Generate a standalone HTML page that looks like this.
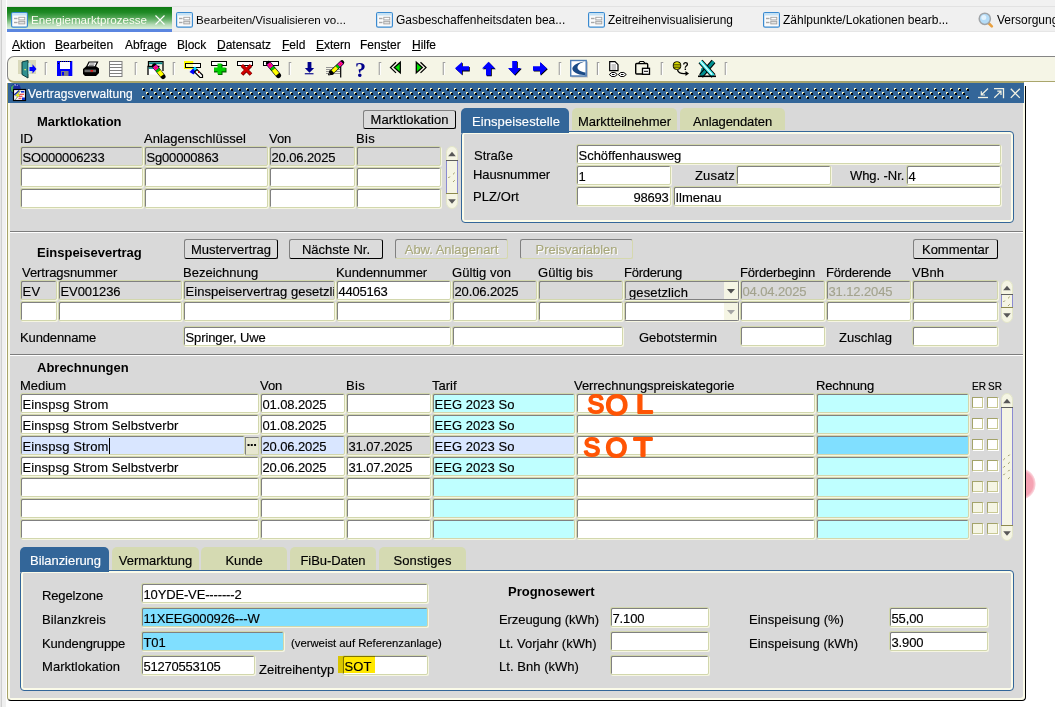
<!DOCTYPE html><html lang="de"><head><meta charset="utf-8"><title>Vertragsverwaltung</title><style>
*{box-sizing:border-box;margin:0;padding:0}
html,body{width:1055px;height:707px;overflow:hidden;background:#fff}
body{position:relative;font-family:"Liberation Sans",Arial,sans-serif;font-size:12px;color:#000;-webkit-text-stroke:0.15px}
.a{position:absolute;white-space:nowrap}
.l{position:absolute;white-space:nowrap;line-height:15px;height:15px;font-size:13px}
.b{font-weight:bold;font-size:13px;-webkit-text-stroke:0}
.f{position:absolute;height:20px;background:#fff;border:1px solid #d2d7ad;box-shadow:inset 1px 1px 0 #808080,1px 1px 0 #f6f6e2;border-radius:2px;padding:3px 0 0 1.5px;line-height:15px;font-size:13px;white-space:nowrap;overflow:hidden}
.f.d{background:#d9d9d9}
.f.c{background:#bfffff}
.f.s{background:#80dfff}
.f.h{background:#d9e6ff}
.f.r{text-align:right;padding-right:1.5px}
.f.g{color:#a3a38e}
.btn{position:absolute;height:20px;background:#dbdbdb;border:1px solid #808080;border-right:1.5px solid #000;border-bottom:1.5px solid #000;border-radius:2.5px;text-align:center;line-height:19px;font-size:13px;white-space:nowrap;overflow:hidden}
.btn.dis{color:#a8a87c;text-shadow:1px 1px 0 #fff;border:1px solid #808080;border-right:1px solid #d5d8ae;border-bottom:1px solid #d5d8ae}
.tab{position:absolute;height:22px;background:#d5dab2;border-radius:5px 5px 0 0;text-align:center;line-height:27px;font-size:13px;white-space:nowrap}
.tab.on{background:#336699;color:#fff;height:25px;text-indent:2px}
.pan{position:absolute;border:1px solid #336699;border-radius:4px;box-shadow:inset 0 0 0 2px #fbfbe9}
.hr{position:absolute;height:2px;border-top:1px solid #7d7d7d;border-bottom:1px solid #fff}
.cb{position:absolute;width:11px;height:11px;background:#fff;border:1px solid #c9c994;border-top-color:#a3a36a;border-left-color:#a3a36a;box-shadow:1px 1px 0 #fff}
.sb{position:absolute;width:13px;background:#e9e9f2;border:1px solid #c3c39b;border-radius:4px}
.tt{-webkit-text-stroke:0;position:absolute;top:8px;height:24px;line-height:24px;font-size:12px;white-space:nowrap;color:#000}
.mi{position:absolute;top:38px;line-height:14px;font-size:12px;white-space:nowrap}
.mi u{text-decoration:underline}
</style></head><body>
<div class="a" style="left:0;top:0;width:1055px;height:32px;background:#f0f0f0;border-bottom:1px solid #e6e6e6;box-shadow:inset 0 6px 0 #f1f1f1,inset 0 7px 0 #e2e2e2"></div>
<div class="a" style="left:0;top:0;width:7px;height:707px;background:#f0f0f0;border-left:1px solid #e6e6e6;box-shadow:inset 1px 0 0 #cfcfcf,inset -1px 0 0 #fff"></div>
<div class="a" style="left:7px;top:7px;width:165px;height:25px;background:linear-gradient(#0d7a11 0%,#1f8a25 25%,#5fae63 55%,#b4dab5 80%,#dcefdc 100%);border-bottom:3px solid #5b86e0"></div>
<svg class="a" style="left:11px;top:12px" width="17" height="16" viewBox="0 0 17 16"><rect x="0.600" y="0.600" width="15.800" height="14.600" rx="1.500" fill="#fbfbfb" stroke="#3a8ad0" stroke-width="1.200"/><rect x="1.200" y="1.200" width="14.600" height="2.300" fill="#c4e2f6"/><rect x="3" y="5.800" width="3.500" height="1.400" fill="#a8a8a8"/><rect x="3" y="9.800" width="3.500" height="1.400" fill="#a8a8a8"/><rect x="7.800" y="5.300" width="6" height="2.600" fill="#fff" stroke="#a0a0a0" stroke-width="0.900"/><rect x="7.800" y="9.300" width="6" height="2.600" fill="#e4e4e4" stroke="#a0a0a0" stroke-width="0.900"/></svg>
<div class="tt" style="left:31px;color:#fdfdf2;top:8px;font-size:11.6px">Energiemarktprozesse</div>
<svg class="a" style="left:154px;top:14px" width="12" height="12" viewBox="0 0 12 12"><path d="M1.5 1.5L10.5 10.5M10.5 1.5L1.5 10.5" stroke="#fff" stroke-width="1.1" fill="none"/></svg>
<svg class="a" style="left:176px;top:12px" width="17" height="16" viewBox="0 0 17 16"><rect x="0.600" y="0.600" width="15.800" height="14.600" rx="1.500" fill="#fbfbfb" stroke="#3a8ad0" stroke-width="1.200"/><rect x="1.200" y="1.200" width="14.600" height="2.300" fill="#c4e2f6"/><rect x="3" y="5.800" width="3.500" height="1.400" fill="#a8a8a8"/><rect x="3" y="9.800" width="3.500" height="1.400" fill="#a8a8a8"/><rect x="7.800" y="5.300" width="6" height="2.600" fill="#fff" stroke="#a0a0a0" stroke-width="0.900"/><rect x="7.800" y="9.300" width="6" height="2.600" fill="#e4e4e4" stroke="#a0a0a0" stroke-width="0.900"/></svg>
<div class="tt" style="left:196px;font-size:11.6px">Bearbeiten/Visualisieren vo...</div>
<svg class="a" style="left:376px;top:12px" width="17" height="16" viewBox="0 0 17 16"><rect x="0.600" y="0.600" width="15.800" height="14.600" rx="1.500" fill="#fbfbfb" stroke="#3a8ad0" stroke-width="1.200"/><rect x="1.200" y="1.200" width="14.600" height="2.300" fill="#c4e2f6"/><rect x="3" y="5.800" width="3.500" height="1.400" fill="#a8a8a8"/><rect x="3" y="9.800" width="3.500" height="1.400" fill="#a8a8a8"/><rect x="7.800" y="5.300" width="6" height="2.600" fill="#fff" stroke="#a0a0a0" stroke-width="0.900"/><rect x="7.800" y="9.300" width="6" height="2.600" fill="#e4e4e4" stroke="#a0a0a0" stroke-width="0.900"/></svg>
<div class="tt" style="left:396px;font-size:12px">Gasbeschaffenheitsdaten bea...</div>
<svg class="a" style="left:588px;top:12px" width="17" height="16" viewBox="0 0 17 16"><rect x="0.600" y="0.600" width="15.800" height="14.600" rx="1.500" fill="#fbfbfb" stroke="#3a8ad0" stroke-width="1.200"/><rect x="1.200" y="1.200" width="14.600" height="2.300" fill="#c4e2f6"/><rect x="3" y="5.800" width="3.500" height="1.400" fill="#a8a8a8"/><rect x="3" y="9.800" width="3.500" height="1.400" fill="#a8a8a8"/><rect x="7.800" y="5.300" width="6" height="2.600" fill="#fff" stroke="#a0a0a0" stroke-width="0.900"/><rect x="7.800" y="9.300" width="6" height="2.600" fill="#e4e4e4" stroke="#a0a0a0" stroke-width="0.900"/></svg>
<div class="tt" style="left:608px;font-size:11.9px">Zeitreihenvisualisierung</div>
<svg class="a" style="left:763px;top:12px" width="17" height="16" viewBox="0 0 17 16"><rect x="0.600" y="0.600" width="15.800" height="14.600" rx="1.500" fill="#fbfbfb" stroke="#3a8ad0" stroke-width="1.200"/><rect x="1.200" y="1.200" width="14.600" height="2.300" fill="#c4e2f6"/><rect x="3" y="5.800" width="3.500" height="1.400" fill="#a8a8a8"/><rect x="3" y="9.800" width="3.500" height="1.400" fill="#a8a8a8"/><rect x="7.800" y="5.300" width="6" height="2.600" fill="#fff" stroke="#a0a0a0" stroke-width="0.900"/><rect x="7.800" y="9.300" width="6" height="2.600" fill="#e4e4e4" stroke="#a0a0a0" stroke-width="0.900"/></svg>
<div class="tt" style="left:783px;font-size:12px">Zählpunkte/Lokationen bearb...</div>
<svg class="a" style="left:977px;top:11px" width="17" height="17" viewBox="0 0 17 17"><path d="M11.500 12L14.800 15.300" stroke="#e8a040" stroke-width="2.600" stroke-linecap="round"/><circle cx="7.800" cy="7.800" r="5.600" fill="#b4dcf8" stroke="#a0a4a8" stroke-width="1.500"/><circle cx="6.800" cy="6.500" r="2.500" fill="#e4f3fd"/></svg>
<div class="tt" style="left:997px">Versorgung</div>
<div class="mi" style="left:12px"><u>A</u>ktion</div>
<div class="mi" style="left:55px"><u>B</u>earbeiten</div>
<div class="mi" style="left:125px">Abf<u>r</u>age</div>
<div class="mi" style="left:177px">B<u>l</u>ock</div>
<div class="mi" style="left:217px"><u>D</u>atensatz</div>
<div class="mi" style="left:282px"><u>F</u>eld</div>
<div class="mi" style="left:316px"><u>E</u>xtern</div>
<div class="mi" style="left:360px">Fen<u>s</u>ter</div>
<div class="mi" style="left:412px"><u>H</u>ilfe</div>
<div class="a" style="left:7px;top:56px;width:1048px;height:27px;background:#f5f5e6;border:1px solid #858585;border-right:0;border-bottom:2px solid #aaa66c;border-radius:7px 0 0 7px"></div>
<svg class="a" style="left:0;top:56px" width="1055" height="28" viewBox="0 56 1055 28"><path d="M45.3 75V62.5h2" stroke="#a0a0a0" stroke-width="1.2" fill="none"/><path d="M46.4 75V63" stroke="#fff" stroke-width="1" fill="none"/><path d="M135.3 75V62.5h2" stroke="#a0a0a0" stroke-width="1.2" fill="none"/><path d="M136.4 75V63" stroke="#fff" stroke-width="1" fill="none"/><path d="M173.3 75V62.5h2" stroke="#a0a0a0" stroke-width="1.2" fill="none"/><path d="M174.4 75V63" stroke="#fff" stroke-width="1" fill="none"/><path d="M289.3 75V62.5h2" stroke="#a0a0a0" stroke-width="1.2" fill="none"/><path d="M290.4 75V63" stroke="#fff" stroke-width="1" fill="none"/><path d="M379.3 75V62.5h2" stroke="#a0a0a0" stroke-width="1.2" fill="none"/><path d="M380.4 75V63" stroke="#fff" stroke-width="1" fill="none"/><path d="M443.3 75V62.5h2" stroke="#a0a0a0" stroke-width="1.2" fill="none"/><path d="M444.4 75V63" stroke="#fff" stroke-width="1" fill="none"/><path d="M559.3 75V62.5h2" stroke="#a0a0a0" stroke-width="1.2" fill="none"/><path d="M560.4 75V63" stroke="#fff" stroke-width="1" fill="none"/><path d="M597.4 75V62.5h2" stroke="#a0a0a0" stroke-width="1.2" fill="none"/><path d="M598.5 75V63" stroke="#fff" stroke-width="1" fill="none"/><path d="M661.3 75V62.5h2" stroke="#a0a0a0" stroke-width="1.2" fill="none"/><path d="M662.4 75V63" stroke="#fff" stroke-width="1" fill="none"/><path d="M725.3 75V62.5h2" stroke="#a0a0a0" stroke-width="1.2" fill="none"/><path d="M726.4 75V63" stroke="#fff" stroke-width="1" fill="none"/><rect x="18" y="60" width="18" height="14" fill="#d9d9bb"/><path d="M22 62l6-1.5V78l-6-3.5z" fill="#2f9090" stroke="#0b3b3b" stroke-width="1"/><rect x="28.5" y="63" width="2" height="11" fill="#b8f0f8"/><path d="M29.5 67h3v-2.7l4 4.6-4 4.6V71h-3z" fill="#0000ff"/><rect x="24.5" y="69" width="1.3" height="1.3" fill="#ffff60"/><rect x="57" y="61" width="15.3" height="15" fill="#0000ff"/><rect x="60" y="62" width="10" height="7" fill="#fff"/><path d="M60 61.5h11" stroke="#000" stroke-width="1" stroke-dasharray="1 1"/><rect x="58" y="63" width="1" height="1" fill="#000"/><rect x="61" y="71" width="7.5" height="5" fill="#808080"/><rect x="62" y="72" width="2" height="3.5" fill="#0000ff"/><path d="M86.5 67l2.5-5h8.5l-2.5 5z" fill="#fff" stroke="#000" stroke-width="1.2"/><path d="M89.5 64h5M88.8 65.6h5" stroke="#555" stroke-width="0.8"/><path d="M83 69l3-2.5h10.5l2.5 2v4.500l-3 3h-11l-2-2z" fill="#000"/><rect x="84.5" y="69.6" width="11.5" height="2.6" fill="#6a6a6a"/><rect x="90.5" y="70.2" width="2.5" height="1.4" fill="#ff0000"/><rect x="109.5" y="61.5" width="12.5" height="15" fill="#fff" stroke="#808080"/><path d="M109.5 64.5h12.500M109.5 67.5h12.500M109.5 70.500h12.500M109.5 73.500h12.500" stroke="#808080"/><path d="M148.500 66.500V61.700h14.500V71" fill="none" stroke="#000" stroke-width="1.3"/><rect x="149.200" y="62.400" width="13.200" height="1.800" fill="#008080"/><rect x="148" y="66.500" width="11" height="8" fill="#fff"/><path d="M148 75V66.500h11.500" fill="none" stroke="#000" stroke-width="1.3"/><rect x="148.700" y="67.200" width="10" height="1.600" fill="#008080"/><path d="M154.5 66.0L163.0 76.5" stroke="#000" stroke-width="5.1" stroke-linecap="round"/><path d="M154.5 66.0L157.2 69.4" stroke="#ff00c8" stroke-width="4.2"/><path d="M155.2 66.8L156.4 68.3" stroke="#ff2020" stroke-width="2.1"/><path d="M157.2 69.4L158.8 71.2" stroke="#00c000" stroke-width="4.2"/><path d="M158.8 71.2L162.2 75.5" stroke="#ffff00" stroke-width="4.2"/><rect x="184" y="61" width="9.300" height="8" fill="#ffff00"/><rect x="185.500" y="63.500" width="15" height="4" fill="#fff" stroke="#000"/><rect x="186" y="64" width="7" height="3" fill="#ffffa0"/><path d="M189.500 72l5-5 3 3-4 4.500z" fill="#0000ff"/><path d="M193 68.500l2-2 3 3.500-2 2z" fill="#00e0ff"/><path d="M194.500 72l2.500-2.500 5.500 5.500v2.500h-2.500z" fill="#fff" stroke="#000" stroke-width="1.200"/><rect x="198" y="71.500" width="1.500" height="1.500" fill="#ff0000"/><rect x="211.500" y="61.500" width="15" height="4" fill="#fff" stroke="#000"/><path d="M218 64h4.500v4h4v4.500h-4v2.500h-4.500v-2.500h-4v-4.500h4z" fill="#006000"/><path d="M217.500 63.500h4v4h4v3.700h-4v3h-4v-3h-3.500v-3.700h3.500z" fill="#00d000"/><rect x="237.500" y="61.500" width="15" height="4" fill="#fff" stroke="#000"/><path d="M242 65.500l9 9M251 65.500l-9 9" stroke="#700000" stroke-width="3.600"/><path d="M241.800 65.200l9 9M250.800 65.200l-9 9" stroke="#d00000" stroke-width="2.600"/><rect x="263.500" y="61.500" width="15" height="4" fill="#fff" stroke="#000"/><path d="M268.5 63.5L278.5 75.5" stroke="#000" stroke-width="5.1" stroke-linecap="round"/><path d="M268.5 63.5L271.7 67.3" stroke="#ff00c8" stroke-width="4.2"/><path d="M269.3 64.5L270.7 66.1" stroke="#ff2020" stroke-width="2.1"/><path d="M271.7 67.3L273.5 69.5" stroke="#00c000" stroke-width="4.2"/><path d="M273.5 69.5L277.5 74.3" stroke="#ffff00" stroke-width="4.2"/><rect x="307.600" y="62" width="3.800" height="6.500" fill="#00008b"/><path d="M304.800 68h9.400l-4.700 4.700z" fill="#00008b"/><rect x="304.800" y="73.200" width="8.700" height="1.100" fill="#00008b"/><path d="M326 67.500h14M326 69.500h14M326 71.500h14M326 73.500h14" stroke="#8a8a8a" stroke-width="0.900"/><path d="M340.700 66v11.500" stroke="#000" stroke-width="1.200"/><path d="M328.500 75l1.500-4.500 3.500 3.500z" fill="#fff" stroke="#000" stroke-width="1"/><path d="M342.0 62.5L331.5 72.5" stroke="#000" stroke-width="4.5" stroke-linecap="round"/><path d="M342.0 62.5L338.6 65.7" stroke="#ff00c8" stroke-width="3.6"/><path d="M341.2 63.3L339.7 64.7" stroke="#ff2020" stroke-width="1.8"/><path d="M338.6 65.7L336.8 67.5" stroke="#00c000" stroke-width="3.6"/><path d="M336.8 67.5L332.6 71.5" stroke="#ffff00" stroke-width="3.6"/><text x="355" y="77" font-family="Liberation Serif,serif" font-weight="bold" font-size="22" fill="#00008b">?</text><path d="M400.300 62.300v10.600l-6-5.300z" fill="#00e000" stroke="#000" stroke-width="1.300"/><path d="M396 62.300l-5.500 5.300 5.500 5.300" fill="none" stroke="#000" stroke-width="1.300"/><path d="M416.300 62.300v10.600l6-5.300z" fill="#00e000" stroke="#000" stroke-width="1.300"/><path d="M420.500 62.300l5.500 5.300-5.500 5.300" fill="none" stroke="#000" stroke-width="1.300"/><path d="M455.0 68.3 462.0 62.0 462.0 66.2 469.0 66.2 469.0 70.6 462.0 70.6 462.0 74.8z" fill="#000" transform="translate(0.8,0.8)"/><path d="M455.0 68.3 462.0 62.0 462.0 66.2 469.0 66.2 469.0 70.6 462.0 70.6 462.0 74.8z" fill="#0000ff"/><path d="M488.5 61.7 495.0 68.5 491.0 68.5 491.0 75.4 486.0 75.4 486.0 68.5 482.0 68.5z" fill="#000" transform="translate(0.8,0.8)"/><path d="M488.5 61.7 495.0 68.5 491.0 68.5 491.0 75.4 486.0 75.4 486.0 68.5 482.0 68.5z" fill="#0000ff"/><path d="M514.5 75.0 508.0 68.0 512.2 68.0 512.2 61.0 517.0 61.0 517.0 68.0 521.0 68.0z" fill="#000" transform="translate(0.8,0.8)"/><path d="M514.5 75.0 508.0 68.0 512.2 68.0 512.2 61.0 517.0 61.0 517.0 68.0 521.0 68.0z" fill="#0000ff"/><path d="M547.0 68.5 540.0 62.0 540.0 66.3 533.0 66.3 533.0 70.8 540.0 70.8 540.0 75.0z" fill="#000" transform="translate(0.8,0.8)"/><path d="M547.0 68.5 540.0 62.0 540.0 66.3 533.0 66.3 533.0 70.8 540.0 70.8 540.0 75.0z" fill="#0000ff"/><rect x="571.500" y="61.500" width="16.500" height="16" fill="#c4c4c4"/><rect x="570.700" y="60.500" width="15.500" height="15.500" fill="#fff" stroke="#4c7cb6" stroke-width="1.400"/><path d="M585 61.500C576 62.500 571.500 66.500 572.500 69.500C574 73.500 580 75.200 585.500 75.200L585.500 72.500C581 72 577.500 70 577.500 67.500C577.500 64.500 581 62.500 585 61.500Z" fill="#1a4a86"/><path d="M609.700 61.700h5.300l3 3v6h-8.300z" fill="#fff" stroke="#000" stroke-width="1.200"/><path d="M611.500 65h4.500M611.500 67h4.500M611.500 69h4.500" stroke="#777" stroke-width="0.800"/><path d="M609.300 74.500l2.500-2h3l2.500 2-2.500 2h-3z" fill="#fff" stroke="#000"/><path d="M618.300 74.500l2.500-2h3l2.500 2-2.500 2h-3z" fill="#fff" stroke="#000"/><path d="M612 74.500h2.500M621 74.500h2.500" stroke="#000" stroke-width="1"/><rect x="635.700" y="63.500" width="12" height="10.500" rx="1" fill="#f5f5e6" stroke="#000" stroke-width="1.400"/><path d="M638.500 63.500l1.500-2h3.500l1.500 2z" fill="#f5f5e6" stroke="#000" stroke-width="1.200"/><rect x="642.500" y="68.300" width="7" height="6" fill="#fff" stroke="#000" stroke-width="1.300"/><path d="M644 71.300h4" stroke="#000" stroke-width="1"/><rect x="673.300" y="61.800" width="7.400" height="7.600" rx="3" fill="#ffff00" stroke="#000" stroke-width="1"/><path d="M673.500 64.300h7M673.500 66h7M673.500 67.700h7" stroke="#000" stroke-width="0.700"/><text x="682.500" y="69.600" font-family="Liberation Sans,sans-serif" font-weight="bold" font-size="10" fill="#000">?</text><path d="M677.500 70C678.500 73 682 74 686 73.500" fill="none" stroke="#000" stroke-width="1.300"/><path d="M685.500 71l3.500 2.500-3.500 2.500z" fill="#000"/><path d="M699.500 76l8-8-6-0z" fill="#008a8a"/><path d="M713.500 61.500L701 76" stroke="#000" stroke-width="5"/><path d="M713.500 61.500L701 76" stroke="#009090" stroke-width="3"/><path d="M700.500 61.500L713.500 76" stroke="#000" stroke-width="5.400"/><path d="M700.500 61.500L713.500 76" stroke="#30e8e8" stroke-width="3.400"/><path d="M700.200 61.200L712 74.500" stroke="#e8ffff" stroke-width="1.200"/><path d="M698 76.300h18" stroke="#000" stroke-width="1.600"/></svg>
<div class="a" style="left:7px;top:83px;width:1019px;height:618px;background:#d9d9d9;border-right:1px solid #000;border-bottom:1px solid #000;border-left:1px solid #a8a46a;border-radius:0 0 4px 4px;box-shadow:inset 2px 0 0 #fbfbe9,inset -2px -2px 0 #fbfbe9"></div>
<div class="a" style="left:8px;top:83px;width:1016px;height:20px;background:#336699"></div>
<div class="a" style="left:1024px;top:82px;width:31px;height:4px;background:#fff"></div>
<svg class="a" style="left:142px;top:88px" width="828" height="11" shape-rendering="crispEdges"><defs><pattern id="dp" width="8" height="8" patternUnits="userSpaceOnUse"><rect x="0" y="0" width="2" height="2" fill="#f4f4c8"/><rect x="1" y="1" width="2" height="2" fill="#000"/><rect x="4" y="4" width="2" height="2" fill="#f4f4c8"/><rect x="5" y="5" width="2" height="2" fill="#000"/></pattern></defs><rect width="828" height="11" fill="url(#dp)"/></svg>
<div class="a" style="left:28px;top:87px;color:#fff;line-height:14px;font-size:12px;letter-spacing:0.12px">Vertragsverwaltung</div>
<svg class="a" style="left:970px;top:84px" width="56" height="19" viewBox="970 84 56 19"><path d="M978 97.500h10" stroke="#f3f3e4" stroke-width="1.300"/><path d="M988 88.500l-6.500 6.200M981.300 91.300v3.700h3.700" fill="none" stroke="#f3f3e4" stroke-width="1.200"/><path d="M994 88.700h9.500v9.500" fill="none" stroke="#f3f3e4" stroke-width="1.300"/><path d="M994.300 97.800l6.600-6.400M997.300 91.200h3.700v3.700" fill="none" stroke="#f3f3e4" stroke-width="1.200"/><path d="M1010.800 88.700l9 9.200M1019.800 88.700l-9 9.200" stroke="#f3f3e4" stroke-width="1.300"/></svg>
<svg class="a" style="left:9px;top:84px" width="18" height="19" viewBox="9 84 18 19"><circle cx="15.500" cy="89" r="5.300" fill="#1a2ba0"/><path d="M11 87c1-1.500 2-2 3-2l-1 3 1 2-1.500 2.500c-1.500-1-2-3-1.500-5.500z" fill="#46a860"/><path d="M14 85l1.500-.5.500 1.500M17 85l1 .5" stroke="#c8c8f0" stroke-width="0.800" fill="none"/><rect x="13.500" y="89.500" width="12" height="11" fill="#fff" stroke="#000" stroke-width="1.200"/><path d="M14.200 95l5-4.500" stroke="#1a2ba0" stroke-width="1.500"/><rect x="21" y="91" width="3.300" height="1.600" fill="#1030d0"/><path d="M19.500 94.300h4.500M19 96.300h3.500M18.500 98.300h3" stroke="#f02020" stroke-width="1.100"/><rect x="22" y="97.500" width="3" height="2.500" fill="#1030d0"/><path d="M19.500 91l-4.500 5h2.500l-2.500 4 5.500-5.500h-2.500l2.500-3.500z" fill="#ffff00" stroke="#1a2ba0" stroke-width="0.300"/></svg>
<div class="l b" style="left:37px;top:114px">Marktlokation</div>
<div class="btn" style="left:363px;top:110px;width:93px;height:19px;line-height:18px;letter-spacing:0.05px">Marktlokation</div>
<div class="l" style="left:20px;top:131px">ID</div>
<div class="l" style="left:144px;top:131px;letter-spacing:0.05px">Anlagenschlüssel</div>
<div class="l" style="left:269px;top:131px;letter-spacing:-0.04px">Von</div>
<div class="l" style="left:356px;top:131px;letter-spacing:0.31px">Bis</div>
<div class="f d" style="left:20px;top:146px;width:123px;letter-spacing:-0.17px">SO000006233</div>
<div class="f d" style="left:144px;top:146px;width:124px;letter-spacing:-0.17px">Sg00000863</div>
<div class="f d" style="left:269px;top:146px;width:86px;letter-spacing:-0.11px">20.06.2025</div>
<div class="f d" style="left:356px;top:146px;width:85px"></div>
<div class="f" style="left:20px;top:167px;width:123px"></div>
<div class="f" style="left:144px;top:167px;width:124px"></div>
<div class="f" style="left:269px;top:167px;width:86px"></div>
<div class="f" style="left:356px;top:167px;width:85px"></div>
<div class="f" style="left:20px;top:188px;width:123px"></div>
<div class="f" style="left:144px;top:188px;width:124px"></div>
<div class="f" style="left:269px;top:188px;width:86px"></div>
<div class="f" style="left:356px;top:188px;width:85px"></div>
<svg class="a" style="left:446px;top:146px" width="12" height="63" viewBox="0 0 12 63"><rect x="0.5" y="0.5" width="11" height="62" rx="6" fill="#f5f5e4" stroke="#e3e6c8"/><path d="M6.0 5.800l3.800 4.400h-7.600z" fill="#585858"/><path d="M6.0 57.7l3.800 -4.400h-7.600z" fill="#585858"/><rect x="0" y="14" width="12" height="34" fill="#f5f5e4"/><path d="M0.500 14V48M11.5 14V48" stroke="#8b8bd2" stroke-width="1"/><path d="M0 14.5H12" stroke="#5e5e5e" stroke-width="1"/><path d="M0 47.5H12" stroke="#8d8a4e" stroke-width="1"/><path d="M7.2 28.2l1.400 -1.400" stroke="#8d8a4e" stroke-width="1"/><path d="M2.4 32.0l1.400 -1.400" stroke="#8d8a4e" stroke-width="1"/><path d="M7.2 35.8l1.400 -1.400" stroke="#8d8a4e" stroke-width="1"/></svg>
<div class="pan" style="left:461px;top:131px;width:553px;height:92px"></div>
<div class="tab on" style="left:461px;top:108px;width:108px;letter-spacing:0.09px">Einspeisestelle</div>
<div class="tab" style="left:572px;top:108px;width:105px">Marktteilnehmer</div>
<div class="tab" style="left:680px;top:108px;width:105px;letter-spacing:-0.10px">Anlagendaten</div>
<div class="l" style="left:474px;top:148px">Straße</div>
<div class="l" style="left:473px;top:167px;letter-spacing:-0.10px">Hausnummer</div>
<div class="l" style="left:473px;top:189px;letter-spacing:0.07px">PLZ/Ort</div>
<div class="f" style="left:576px;top:144px;width:425px;letter-spacing:-0.02px">Schöffenhausweg</div>
<div class="f" style="left:576px;top:165px;width:95px">1</div>
<div class="l" style="left:695px;top:168px;letter-spacing:0.16px">Zusatz</div>
<div class="f" style="left:736px;top:165px;width:95px"></div>
<div class="l" style="left:850px;top:168px;letter-spacing:-0.07px">Whg. -Nr.</div>
<div class="f" style="left:906px;top:165px;width:95px">4</div>
<div class="f r" style="left:576px;top:186px;width:95px;letter-spacing:-0.23px">98693</div>
<div class="f" style="left:673px;top:186px;width:328px;letter-spacing:-0.04px">Ilmenau</div>
<div class="hr" style="left:10px;top:231px;width:1013px"></div>
<div class="l b" style="left:37px;top:245px">Einspeisevertrag</div>
<div class="btn" style="left:184px;top:239px;width:94px">Mustervertrag</div>
<div class="btn" style="left:289px;top:239px;width:94px;letter-spacing:0.03px">Nächste Nr.</div>
<div class="btn dis" style="left:395px;top:239px;width:113px;letter-spacing:-0.03px">Abw. Anlagenart</div>
<div class="btn dis" style="left:520px;top:239px;width:113px;letter-spacing:-0.03px">Preisvariablen</div>
<div class="btn" style="left:913px;top:239px;width:85px;letter-spacing:-0.02px">Kommentar</div>
<div class="l" style="left:22px;top:265px;letter-spacing:-0.06px">Vertragsnummer</div>
<div class="l" style="left:183px;top:265px">Bezeichnung</div>
<div class="l" style="left:336px;top:265px;letter-spacing:-0.12px">Kundennummer</div>
<div class="l" style="left:452px;top:265px;letter-spacing:0.05px">Gültig von</div>
<div class="l" style="left:538px;top:265px;letter-spacing:0.08px">Gültig bis</div>
<div class="l" style="left:624px;top:265px;letter-spacing:-0.22px">Förderung</div>
<div class="l" style="left:740px;top:265px;letter-spacing:-0.19px">Förderbeginn</div>
<div class="l" style="left:826px;top:265px;letter-spacing:-0.22px">Förderende</div>
<div class="l" style="left:912px;top:265px;letter-spacing:0.05px">VBnh</div>
<div class="f d" style="left:20px;top:280px;width:37px;letter-spacing:0.33px">EV</div>
<div class="f d" style="left:58px;top:280px;width:124px;letter-spacing:-0.09px">EV001236</div>
<div class="f d" style="left:183px;top:280px;width:152px;letter-spacing:0.04px">Einspeiservertrag gesetzli</div>
<div class="f" style="left:336px;top:280px;width:115px;letter-spacing:-0.23px">4405163</div>
<div class="f d" style="left:452px;top:280px;width:85px;letter-spacing:-0.11px">20.06.2025</div>
<div class="f d" style="left:538px;top:280px;width:85px"></div>
<div class="f d" style="left:624px;top:280px;width:115px;border-right-color:#808080;border-bottom-color:#808080;padding:4px 0 0 4px;letter-spacing:0.12px">gesetzlich<div style="position:absolute;right:0;top:1px;width:14px;height:17px;background:#f5f5e4"></div><svg style="position:absolute;right:3px;top:8px" width="8" height="5"><path d="M0 0h8l-4 4.500z" fill="#505050"/></svg></div>
<div class="f d g" style="left:740px;top:280px;width:85px;letter-spacing:-0.11px">04.04.2025</div>
<div class="f d g" style="left:826px;top:280px;width:85px;letter-spacing:-0.11px">31.12.2045</div>
<div class="f d" style="left:912px;top:280px;width:86px"></div>
<div class="f" style="left:20px;top:301px;width:37px"></div>
<div class="f" style="left:58px;top:301px;width:124px"></div>
<div class="f" style="left:183px;top:301px;width:152px"></div>
<div class="f" style="left:336px;top:301px;width:115px"></div>
<div class="f" style="left:452px;top:301px;width:85px"></div>
<div class="f" style="left:538px;top:301px;width:85px"></div>
<div class="f" style="left:624px;top:301px;width:115px;border-right-color:#808080;border-bottom-color:#808080;padding:4px 0 0 4px"><div style="position:absolute;right:0;top:1px;width:14px;height:17px;background:#f5f5e4"></div><svg style="position:absolute;right:3px;top:8px" width="8" height="5"><path d="M0 0h8l-4 4.500z" fill="#a4a4a4"/></svg></div>
<div class="f" style="left:740px;top:301px;width:85px"></div>
<div class="f" style="left:826px;top:301px;width:85px"></div>
<div class="f" style="left:912px;top:301px;width:86px"></div>
<svg class="a" style="left:1001px;top:280px" width="12" height="43" viewBox="0 0 12 43"><rect x="0.5" y="0.5" width="11" height="42" rx="6" fill="#f5f5e4" stroke="#e3e6c8"/><path d="M6.0 5.800l3.800 4.400h-7.600z" fill="#585858"/><path d="M6.0 37.7l3.800 -4.400h-7.600z" fill="#585858"/><rect x="0" y="14" width="12" height="14" fill="#f5f5e4"/><path d="M0.500 14V28M11.5 14V28" stroke="#8b8bd2" stroke-width="1"/><path d="M0 14.5H12" stroke="#5e5e5e" stroke-width="1"/><path d="M0 27.5H12" stroke="#8d8a4e" stroke-width="1"/><path d="M7.2 18.2l1.400 -1.400" stroke="#8d8a4e" stroke-width="1"/><path d="M2.4 22.0l1.400 -1.400" stroke="#8d8a4e" stroke-width="1"/><path d="M7.2 25.8l1.400 -1.400" stroke="#8d8a4e" stroke-width="1"/></svg>
<div class="l" style="left:20px;top:330px;letter-spacing:-0.13px">Kundenname</div>
<div class="f" style="left:183px;top:326px;width:268px;letter-spacing:-0.11px">Springer, Uwe</div>
<div class="f" style="left:452px;top:326px;width:171px"></div>
<div class="l" style="left:639px;top:330px">Gebotstermin</div>
<div class="f" style="left:740px;top:326px;width:85px"></div>
<div class="l" style="left:839px;top:330px;letter-spacing:0.03px">Zuschlag</div>
<div class="f" style="left:912px;top:326px;width:86px"></div>
<div class="hr" style="left:10px;top:354px;width:1013px"></div>
<div class="l b" style="left:37px;top:360px">Abrechnungen</div>
<div class="l" style="left:20px;top:378px;letter-spacing:-0.04px">Medium</div>
<div class="l" style="left:260px;top:378px;letter-spacing:-0.04px">Von</div>
<div class="l" style="left:346px;top:378px;letter-spacing:0.31px">Bis</div>
<div class="l" style="left:432px;top:378px">Tarif</div>
<div class="l" style="left:574px;top:378px;letter-spacing:-0.06px">Verrechnungspreiskategorie</div>
<div class="l" style="left:816px;top:378px;letter-spacing:-0.16px">Rechnung</div>
<div class="l" style="left:972px;top:379px;font-size:10px;letter-spacing:0.05px">ER</div>
<div class="l" style="left:988px;top:379px;font-size:10px;letter-spacing:0.05px">SR</div>
<div class="f" style="left:20px;top:393px;width:239px;letter-spacing:0.11px">Einspsg Strom</div>
<div class="f" style="left:260px;top:393px;width:85px;letter-spacing:-0.11px">01.08.2025</div>
<div class="f" style="left:346px;top:393px;width:85px"></div>
<div class="f c" style="left:432px;top:393px;width:143px;letter-spacing:0.05px">EEG 2023 So</div>
<div class="f" style="left:576px;top:393px;width:239px"></div>
<div class="f c" style="left:816px;top:393px;width:153px"></div>
<div class="cb" style="left:972px;top:397px"></div>
<div class="cb" style="left:987px;top:397px"></div>
<div class="f" style="left:20px;top:414px;width:239px;letter-spacing:0.08px">Einspsg Strom Selbstverbr</div>
<div class="f" style="left:260px;top:414px;width:85px;letter-spacing:-0.11px">01.08.2025</div>
<div class="f" style="left:346px;top:414px;width:85px"></div>
<div class="f c" style="left:432px;top:414px;width:143px;letter-spacing:0.05px">EEG 2023 So</div>
<div class="f" style="left:576px;top:414px;width:239px"></div>
<div class="f c" style="left:816px;top:414px;width:153px"></div>
<div class="cb" style="left:972px;top:418px"></div>
<div class="cb" style="left:987px;top:418px"></div>
<div class="f h" style="left:20px;top:435px;width:225px;letter-spacing:0.11px">Einspsg Strom</div>
<div class="f h" style="left:260px;top:435px;width:85px;letter-spacing:-0.11px">20.06.2025</div>
<div class="f d" style="left:346px;top:435px;width:85px;letter-spacing:-0.11px">31.07.2025</div>
<div class="f h" style="left:432px;top:435px;width:143px;letter-spacing:0.05px">EEG 2023 So</div>
<div class="f" style="left:576px;top:435px;width:239px"></div>
<div class="f s" style="left:816px;top:435px;width:153px"></div>
<div class="cb" style="left:972px;top:439px"></div>
<div class="cb" style="left:987px;top:439px"></div>
<div class="f" style="left:20px;top:456px;width:239px;letter-spacing:0.08px">Einspsg Strom Selbstverbr</div>
<div class="f" style="left:260px;top:456px;width:85px;letter-spacing:-0.11px">20.06.2025</div>
<div class="f" style="left:346px;top:456px;width:85px;letter-spacing:-0.11px">31.07.2025</div>
<div class="f c" style="left:432px;top:456px;width:143px;letter-spacing:0.05px">EEG 2023 So</div>
<div class="f" style="left:576px;top:456px;width:239px"></div>
<div class="f c" style="left:816px;top:456px;width:153px"></div>
<div class="cb" style="left:972px;top:460px"></div>
<div class="cb" style="left:987px;top:460px"></div>
<div class="f" style="left:20px;top:477px;width:239px"></div>
<div class="f" style="left:260px;top:477px;width:85px"></div>
<div class="f" style="left:346px;top:477px;width:85px"></div>
<div class="f c" style="left:432px;top:477px;width:143px"></div>
<div class="f" style="left:576px;top:477px;width:239px"></div>
<div class="f c" style="left:816px;top:477px;width:153px"></div>
<div class="cb" style="left:972px;top:481px;background:#f5f5e4"></div>
<div class="cb" style="left:987px;top:481px;background:#f5f5e4"></div>
<div class="f" style="left:20px;top:498px;width:239px"></div>
<div class="f" style="left:260px;top:498px;width:85px"></div>
<div class="f" style="left:346px;top:498px;width:85px"></div>
<div class="f c" style="left:432px;top:498px;width:143px"></div>
<div class="f" style="left:576px;top:498px;width:239px"></div>
<div class="f c" style="left:816px;top:498px;width:153px"></div>
<div class="cb" style="left:972px;top:502px;background:#f5f5e4"></div>
<div class="cb" style="left:987px;top:502px;background:#f5f5e4"></div>
<div class="f" style="left:20px;top:519px;width:239px"></div>
<div class="f" style="left:260px;top:519px;width:85px"></div>
<div class="f" style="left:346px;top:519px;width:85px"></div>
<div class="f c" style="left:432px;top:519px;width:143px"></div>
<div class="f" style="left:576px;top:519px;width:239px"></div>
<div class="f c" style="left:816px;top:519px;width:153px"></div>
<div class="cb" style="left:972px;top:523px;background:#f5f5e4"></div>
<div class="cb" style="left:987px;top:523px;background:#f5f5e4"></div>
<div class="a" style="left:245px;top:437px;width:14px;height:18px;background:#e6e6d0;border:1px solid #808080;border-right-color:#d2d7ad;border-bottom-color:#d2d7ad;font-weight:bold;font-size:13px;line-height:7px;letter-spacing:-0.35px;text-align:center;text-indent:-0.5px;overflow:hidden">...</div>
<div class="a" style="left:109px;top:438px;width:1px;height:16px;background:#000"></div>
<svg class="a" style="left:1001px;top:393px" width="12" height="148" viewBox="0 0 12 148"><rect x="0.5" y="0.5" width="11" height="147" rx="6" fill="#f5f5e4" stroke="#e3e6c8"/><path d="M6.0 5.800l3.800 4.400h-7.600z" fill="#585858"/><path d="M6.0 142.7l3.800 -4.400h-7.600z" fill="#585858"/><rect x="0" y="14" width="12" height="119" fill="#f5f5e4"/><path d="M0.500 14V133M11.5 14V133" stroke="#8b8bd2" stroke-width="1"/><path d="M0 14.5H12" stroke="#5e5e5e" stroke-width="1"/><path d="M0 132.5H12" stroke="#8d8a4e" stroke-width="1"/><path d="M7.2 63.1l1.400 -1.400" stroke="#8d8a4e" stroke-width="1"/><path d="M2.4 66.9l1.400 -1.400" stroke="#8d8a4e" stroke-width="1"/><path d="M7.2 70.7l1.400 -1.400" stroke="#8d8a4e" stroke-width="1"/><path d="M2.4 74.5l1.400 -1.400" stroke="#8d8a4e" stroke-width="1"/><path d="M7.2 78.3l1.400 -1.400" stroke="#8d8a4e" stroke-width="1"/><path d="M2.4 82.1l1.400 -1.400" stroke="#8d8a4e" stroke-width="1"/><path d="M7.2 85.9l1.400 -1.400" stroke="#8d8a4e" stroke-width="1"/></svg>
<svg class="a" style="left:570px;top:385px;-webkit-text-stroke:0" width="120" height="80" viewBox="570 385 120 80" font-family="Liberation Sans,sans-serif" font-weight="normal" fill="#ff5505" stroke="#ff5505" stroke-width="1.900" stroke-linejoin="round" stroke-linecap="round"><text x="587.500" y="412.500" font-size="25">S</text><text x="605.500" y="415" font-size="29">O</text><text x="636" y="413" font-size="25" textLength="17" lengthAdjust="spacingAndGlyphs">L</text><text x="583.500" y="456" font-size="25">S</text><text x="605.500" y="457" font-size="28">O</text><text x="633.500" y="455.500" font-size="26" textLength="19" lengthAdjust="spacingAndGlyphs">T</text></svg>
<div class="a" style="left:1026px;top:468px;width:11px;height:32px;overflow:hidden"><div style="position:absolute;left:-21px;top:0;width:31px;height:32px;border-radius:50%;background:radial-gradient(closest-side,#f59fb0 0%,#f5a3b3 80%,#fbd5dc 95%,#fff 100%)"></div></div>
<div class="pan" style="left:20px;top:570px;width:994px;height:121px"></div>
<div class="tab on" style="left:20px;top:547px;width:89px;letter-spacing:-0.05px">Bilanzierung</div>
<div class="tab" style="left:112px;top:547px;width:87px;height:23px;letter-spacing:-0.04px">Vermarktung</div>
<div class="tab" style="left:201px;top:547px;width:86px;height:23px;letter-spacing:-0.12px">Kunde</div>
<div class="tab" style="left:290px;top:547px;width:86px;height:23px;letter-spacing:-0.07px">FiBu-Daten</div>
<div class="tab" style="left:379px;top:547px;width:87px;height:23px;letter-spacing:0.10px">Sonstiges</div>
<div class="l" style="left:42px;top:588px;letter-spacing:-0.13px">Regelzone</div>
<div class="l" style="left:42px;top:612px;letter-spacing:0.10px">Bilanzkreis</div>
<div class="l" style="left:42px;top:636px;letter-spacing:-0.19px">Kundengruppe</div>
<div class="l" style="left:42px;top:659px;letter-spacing:0.05px">Marktlokation</div>
<div class="f" style="left:141px;top:583px;width:287px;letter-spacing:-0.15px">10YDE-VE-------2</div>
<div class="f s" style="left:141px;top:607px;width:287px;letter-spacing:-0.14px">11XEEG000926---W</div>
<div class="f s" style="left:141px;top:631px;width:143px;letter-spacing:-0.13px">T01</div>
<div class="l" style="left:291px;top:636px;font-size:11.3px">(verweist auf Referenzanlage)</div>
<div class="f" style="left:141px;top:655px;width:114px;letter-spacing:-0.23px">51270553105</div>
<div class="l" style="left:259px;top:662px">Zeitreihentyp</div>
<div class="f" style="left:342px;top:655px;width:86px;letter-spacing:0.09px">SOT</div>
<div class="a" style="left:338px;top:656px;width:37px;height:17px;background:#ffe800;mix-blend-mode:multiply"></div>
<div class="l b" style="left:508px;top:584px">Prognosewert</div>
<div class="l" style="left:499px;top:612px;letter-spacing:-0.08px">Erzeugung (kWh)</div>
<div class="l" style="left:499px;top:636px">Lt. Vorjahr (kWh)</div>
<div class="l" style="left:499px;top:659px;letter-spacing:0.04px">Lt. Bnh (kWh)</div>
<div class="f" style="left:610px;top:607px;width:99px;letter-spacing:-0.11px">7.100</div>
<div class="f" style="left:610px;top:631px;width:99px"></div>
<div class="f" style="left:610px;top:655px;width:99px"></div>
<div class="l" style="left:749px;top:612px;letter-spacing:0.02px">Einspeisung (%)</div>
<div class="l" style="left:749px;top:636px">Einspeisung (kWh)</div>
<div class="f" style="left:889px;top:607px;width:99px;letter-spacing:-0.11px">55,00</div>
<div class="f" style="left:889px;top:631px;width:99px;letter-spacing:-0.11px">3.900</div>
</body></html>
